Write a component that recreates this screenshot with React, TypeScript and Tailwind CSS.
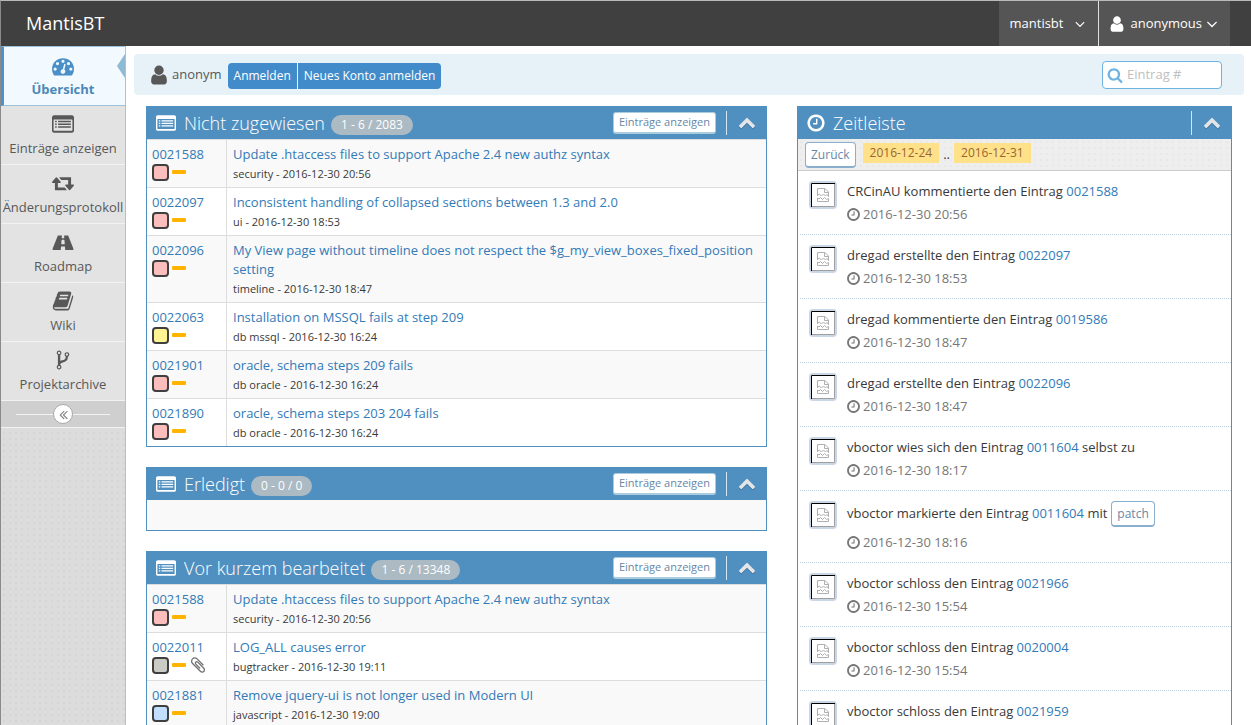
import React from "react";

type IconProps = { d: string; className?: string; box?: string };

function Icon({ d, className = "", box = "0 0 1792 1792" }: IconProps) {
  return (
    <svg viewBox={box} className={`shrink-0 ${className}`} fill="currentColor" fillRule="evenodd" aria-hidden="true">
      <path d={d} />
    </svg>
  );
}

const dot = "q0-53-37.5-90.5t-90.5-37.5-90.5 37.5-37.5 90.5 37.5 90.5 90.5 37.5 90.5-37.5 37.5-90.5z";

const paths = {
  user: "M1536 1399q0 109-62.5 187t-150.5 78h-854q-88 0-150.5-78t-62.5-187q0-85 8.5-160.5t31.5-152 58.5-131 94-89 134.5-34.5q131 128 313 128t313-128q76 0 134.5 34.5t94 89 58.5 131 31.5 152 8.5 160.5zm-256-887q0 159-112.5 271.5t-271.5 112.5-271.5-112.5-112.5-271.5 112.5-271.5 271.5-112.5 271.5 112.5 112.5 271.5z",
  search: "M1216 832q0-185-131.5-316.5t-316.5-131.5-316.5 131.5-131.5 316.5 131.5 316.5 316.5 131.5 316.5-131.5 131.5-316.5zm512 832q0 52-38 90t-90 38q-54 0-90-38l-343-342q-179 124-399 124-143 0-273.5-55.5t-225-150-150-225-55.5-273.5 55.5-273.5 150-225 225-150 273.5-55.5 273.5 55.5 225 150 150 225 55.5 273.5q0 220-124 399l343 343q37 37 37 90z",
  clock: "M1024 544v448q0 14-9 23t-23 9h-320q-14 0-23-9t-9-23v-64q0-14 9-23t23-9h224v-352q0-14 9-23t23-9h64q14 0 23 9t9 23zm416 352q0-148-73-273t-198-198-273-73-273 73-198 198-73 273 73 273 198 198 273 73 273-73 198-198 73-273zm224 0q0 209-103 385.5t-279.5 279.5-385.5 103-385.5-103-279.5-279.5-103-385.5 103-385.5 279.5-279.5 385.5-103 385.5 103 279.5 279.5 103 385.5z",
  chevronUp: "M1683 1331l-166 165q-19 19-45 19t-45-19l-531-531-531 531q-19 19-45 19t-45-19l-166-165q-19-19-19-45.5t19-45.5l742-741q19-19 45-19t45 19l742 741q19 19 19 45.5t-19 45.5z",
  angleDown: "M1395 736q0 13-10 23l-466 466q-10 10-23 10t-23-10l-466-466q-10-10-10-23t10-23l50-50q10-10 23-10t23 10l393 393 393-393q10-10 23-10t23 10l50 50q10 10 10 23z",
  doubleLeft: "M1011 1376q0 13-10 23l-50 50q-10 10-23 10t-23-10l-466-466q-10-10-10-23t10-23l466-466q10-10 23-10t23 10l50 50q10 10 10 23t-10 23l-393 393 393 393q10 10 10 23zm384 0q0 13-10 23l-50 50q-10 10-23 10t-23-10l-466-466q-10-10-10-23t10-23l466-466q10-10 23-10t23 10l50 50q10 10 10 23t-10 23l-393 393 393 393q10 10 10 23z",
  listAlt: "M160 192h1472q66 0 113 47t47 113v1088q0 66-47 113t-113 47h-1472q-66 0-113-47t-47-113v-1088q0-66 47-113t113-47zM128 560v848q0 32 32 32h1472q32 0 32-32v-848q0-32-32-32h-1472q-32 0-32 32zM256 640h128v112h-128zM496 640h1040v112h-1040zM256 864h128v112h-128zM496 864h1040v112h-1040zM256 1088h128v112h-128zM496 1088h1040v112h-1040z",
  retweet: "M1280 1632q0 13-9.5 22.5t-22.5 9.5h-960q-8 0-13.5-2t-9-7-5.5-8-3-11.5-1-11.5v-600h-192q-26 0-45-19t-19-45q0-24 15-41l320-384q19-22 49-22t49 22l320 384q15 17 15 41 0 26-19 45t-45 19h-192v384h576q16 0 25 11l160 192q7 10 7 21zm640-416q0 24-15 41l-320 384q-20 23-49 23t-49-23l-320-384q-15-17-15-41 0-26 19-45t45-19h192v-384h-576q-16 0-25-12l-160-192q-7-9-7-20 0-13 9.5-22.5t22.5-9.5h960q8 0 13.5 2t9 7 5.5 8 3 11.5 1 11.5v600h192q26 0 45 19t19 45z",
  road: "M1111 996v-4l-24-320q-1-13-11-22.5t-23-9.5h-186q-13 0-23 9.5t-11 22.5l-24 320v4q-1 12 8 20t21 8h244q12 0 21-8t8-20zm759 467q0 73-46 73h-704q13 0 22-9.5t8-22.5l-20-256q-1-13-11-22.5t-23-9.5h-272q-13 0-23 9.5t-11 22.5l-20 256q-1 13 8 22.5t22 9.5h-704q-46 0-46-73 0-54 26-116l417-1044q8-19 26-33t38-14h339q-13 0-23 9.5t-11 22.5l-15 192q-1 14 8 23t22 9h166q13 0 22-9t8-23l-15-192q-1-13-11-22.5t-23-9.5h339q20 0 38 14t26 33l417 1044q26 62 26 116z",
  book: "M1703 478q40 57 18 129l-275 906q-19 64-76.5 107.5t-122.5 43.5h-923q-77 0-148.5-53.5t-99.5-131.5q-24-67-2-127 0-4 3-27t4-37q1-8-3-21.5t-3-19.5q2-11 8-21t16.5-23.5 16.5-23.5q23-38 45-91.5t30-91.5q3-10 .5-30t-.5-28q3-11 17-28t17-23q21-36 42-92t25-90q1-9-2.5-32t.5-28q4-13 22-30.5t22-22.5q19-26 42.5-84.5t27.5-96.5q1-8-3-25.5t-2-26.5q2-8 9-18t18-23 17-21q8-12 16.5-30.5t15-35 16-36 19.5-32 26.5-23.5 36-11.5 47.5 5.5l-1 3q38-9 51-9h761q74 0 114 56t18 130l-274 906q-36 119-71.5 153.5t-128.5 34.5h-869q-27 0-38 15-11 16-1 43 24 70 144 70h923q29 0 56-15.5t35-41.5l300-987q7-22 5-57 38 15 59 43zm-1064 2q-4 13 2 22.5t20 9.5h608q13 0 25.5-9.5t16.5-22.5l21-64q4-13-2-22.5t-20-9.5h-608q-13 0-25.5 9.5t-16.5 22.5zm-83 256q-4 13 2 22.5t20 9.5h608q13 0 25.5-9.5t16.5-22.5l21-64q4-13-2-22.5t-20-9.5h-608q-13 0-25.5 9.5t-16.5 22.5z",
  fork: "M672 1472q0-40-28-68t-68-28-68 28-28 68 28 68 68 28 68-28 28-68zm0-1152q0-40-28-68t-68-28-68 28-28 68 28 68 68 28 68-28 28-68zm640 128q0-40-28-68t-68-28-68 28-28 68 28 68 68 28 68-28 28-68zm96 0q0 52-26 96.5t-70 69.5q-2 287-226 414-67 38-203 81-128 40-169.5 71t-41.5 100v26q44 25 70 69.5t26 96.5q0 80-56 136t-136 56-136-56-56-136q0-52 26-96.5t70-69.5v-820q-44-25-70-69.5t-26-96.5q0-80 56-136t136-56 136 56 56 136q0 52-26 96.5t-70 69.5v497q54-26 154-57 55-17 87.5-29.5t70.5-31 59-39.5 40.5-51 28-69.5 8.5-91.5q-44-25-70-69.5t-26-96.5q0-80 56-136t136-56 136 56 56 136z",
  paperclip: "M1596 1385q0 117-79 196t-196 79q-135 0-235-100l-777-776q-113-115-113-271 0-159 110-270t269-111q158 0 273 113l605 606q10 10 10 22 0 16-30.5 46.5t-46.5 30.5q-13 0-23-10l-606-607q-79-77-181-77-106 0-179 75t-73 181q0 105 76 181l776 777q63 63 145 63 64 0 106-42t42-106q0-82-63-145l-581-581q-26-24-60-24-29 0-48 19t-19 48q0 32 25 59l410 410q10 10 10 22 0 16-31 47t-47 31q-12 0-22-10l-410-410q-63-61-63-149 0-82 57-139t139-57q88 0 149 63l581 581q100 98 100 235z",
  dashboard:
    `M384 1152${dot}M576 704${dot}` +
    "M1004 1185l101-382q6-26-7.5-48.5t-38.5-29.5-48 6.5-30 39.5l-101 382q-60 5-107 43.5t-63 98.5q-20 77 20 146t117 89 146-20 89-117q16-60-6-117t-72-91z" +
    `M1664 1152${dot}M1024 512${dot}M1472 704${dot}` +
    "M1792 1152q0 261-141 483-19 29-54 29h-1402q-35 0-54-29-141-221-141-483 0-182 71-348t191-286 286-191 348-71 348 71 286 191 191 286 71 348z",
};

type Nav = { label: string; d: string; box?: string };

const navItems: Nav[] = [
  { label: "Einträge anzeigen", d: paths.listAlt },
  { label: "Änderungsprotokoll", d: paths.retweet, box: "0 128 1920 1792" },
  { label: "Roadmap", d: paths.road, box: "0 0 1920 1664" },
  { label: "Wiki", d: paths.book },
  { label: "Projektarchive", d: paths.fork },
];

type Issue = { id: string; title: string; category: string; date: string; status: string; clip?: boolean };

const RED = "bg-[#fcbdbd]";

const unassigned: Issue[] = [
  { id: "0021588", title: "Update .htaccess files to support Apache 2.4 new authz syntax", category: "security", date: "2016-12-30 20:56", status: RED },
  { id: "0022097", title: "Inconsistent handling of collapsed sections between 1.3 and 2.0", category: "ui", date: "2016-12-30 18:53", status: RED },
  { id: "0022096", title: "My View page without timeline does not respect the $g_my_view_boxes_fixed_position setting", category: "timeline", date: "2016-12-30 18:47", status: RED },
  { id: "0022063", title: "Installation on MSSQL fails at step 209", category: "db mssql", date: "2016-12-30 16:24", status: "bg-[#fff494]" },
  { id: "0021901", title: "oracle, schema steps 209 fails", category: "db oracle", date: "2016-12-30 16:24", status: RED },
  { id: "0021890", title: "oracle, schema steps 203 204 fails", category: "db oracle", date: "2016-12-30 16:24", status: RED },
];

const recent: Issue[] = [
  { id: "0021588", title: "Update .htaccess files to support Apache 2.4 new authz syntax", category: "security", date: "2016-12-30 20:56", status: RED },
  { id: "0022011", title: "LOG_ALL causes error", category: "bugtracker", date: "2016-12-30 19:11", status: "bg-[#c9ccc4]", clip: true },
  { id: "0021881", title: "Remove jquery-ui is not longer used in Modern UI", category: "javascript", date: "2016-12-30 19:00", status: "bg-[#c2dfff]" },
];

type Event = { before: string; id: string; after?: string; tag?: string; time?: string };

const events: Event[] = [
  { before: "CRCinAU kommentierte den Eintrag", id: "0021588", time: "2016-12-30 20:56" },
  { before: "dregad erstellte den Eintrag", id: "0022097", time: "2016-12-30 18:53" },
  { before: "dregad kommentierte den Eintrag", id: "0019586", time: "2016-12-30 18:47" },
  { before: "dregad erstellte den Eintrag", id: "0022096", time: "2016-12-30 18:47" },
  { before: "vboctor wies sich den Eintrag", id: "0011604", after: "selbst zu", time: "2016-12-30 18:17" },
  { before: "vboctor markierte den Eintrag", id: "0011604", after: "mit", tag: "patch", time: "2016-12-30 18:16" },
  { before: "vboctor schloss den Eintrag", id: "0021966", time: "2016-12-30 15:54" },
  { before: "vboctor schloss den Eintrag", id: "0020004", time: "2016-12-30 15:54" },
  { before: "vboctor schloss den Eintrag", id: "0021959" },
];

function CollapseButton() {
  return (
    <div className="flex h-6 items-center border-l border-[#d5e6f2] pl-[11px]">
      <button type="button" aria-label="Einklappen" className="pb-[2px] text-[#e2e6e9]">
        <Icon d={paths.chevronUp} className="size-[18px] drop-shadow-[0_1px_0_rgba(0,0,0,0.25)]" />
      </button>
    </div>
  );
}

function IssueBox({ title, badge, children }: { title: string; badge: string; children: React.ReactNode }) {
  return (
    <section className="border border-t-0 border-[#5090c1]">
      <header className="-mx-px flex h-[33px] items-center justify-between bg-[#5090c1] pl-[10px] pr-[11px] text-white">
        <div className="flex items-center">
          <Icon d={paths.listAlt} className="size-5" />
          <h2 className="ml-[8px] text-lg font-light">{title}</h2>
          <span className="ml-[6px] mt-1 flex h-5 items-center rounded-full bg-[#abbac3] px-[10px] text-xs">{badge}</span>
        </div>
        <div className="flex items-center gap-[10px]">
          <a href="#" className="flex h-[22px] items-center rounded-[3px] border border-b-2 border-[#abccdf] bg-white px-[5px] pt-px text-[11px] text-[#6688a6]">
            Einträge anzeigen
          </a>
          <CollapseButton />
        </div>
      </header>
      {children}
    </section>
  );
}

function IssueTable({ issues }: { issues: Issue[] }) {
  return (
    <table className="w-full border-separate border-spacing-0 text-[13px] leading-[19px]">
      <tbody>
        {issues.map((issue) => (
          <tr key={issue.id} className="align-top odd:bg-[#f9f9f9]">
            <td className="w-20 border-r border-t border-[#ddd] pl-[5px] pt-[5px]">
              <a href="#" className="block text-[#337ab7]">{issue.id}</a>
              <div className="-mt-px flex h-[18px] items-center gap-[3px]">
                <span className={`size-[17px] rounded border-2 border-[#3f3f3f] ${issue.status}`} />
                <span className="h-1 w-[14px] rounded-[1px] bg-[#ffb400]" />
                {issue.clip && <Icon d={paths.paperclip} className="size-[18px] text-[#707070]" />}
              </div>
            </td>
            <td className="border-t border-[#ddd] px-[6px] pb-[3px] pt-[5px]">
              <a href="#" className="text-[#337ab7]">{issue.title}</a>
              <p className="text-[11px] leading-5 text-[#393939]">
                {issue.category} - {issue.date}
              </p>
            </td>
          </tr>
        ))}
      </tbody>
    </table>
  );
}

function Avatar() {
  return (
    <span className="flex size-7 shrink-0 items-center justify-center rounded bg-[#c9d6e5]">
      <svg viewBox="0 0 24 24" className="size-6" aria-hidden="true">
        <path d="M0 0h24v24H0z" fill="#fff" />
        <path d="M23.5 1v22.500H1" fill="none" stroke="#a0a0a0" />
        <path d="M.5 24V.5H24" fill="none" stroke="#000" />
        <g fill="none" stroke="#b0b0b0">
          <path d="M6.500 13V5.500h7.500l3.500 3.500v4.500" />
          <path d="M13.500 5.500v4h4" />
          <path d="M6.500 12.500l2-1.500 2 2 2-2 2 2 1.500-1.500 1.500 2" />
          <path d="M6.500 15v3.500h11v-3l-2 1-2-2-2 2-2-2-1.500 1.500z" />
        </g>
      </svg>
    </span>
  );
}

export default function App() {
  return (
    <div className="flex h-screen flex-col overflow-hidden border-l border-t border-[#8a8a8a] border-t-[#b8bab8] bg-white font-['Open_Sans','Noto_Sans',sans-serif] text-[13px] text-[#393939]">
      <header className="flex h-[45px] shrink-0 items-center justify-between bg-[#404040] pl-[25px] pr-[21px] text-white">
        <a href="#" className="pb-[2px] text-lg">MantisBT</a>
        <nav className="flex h-full">
          <button type="button" className="flex h-full items-center gap-[9px] bg-[#555] pl-[11px] pr-[10px]">
            mantisbt
            <Icon d={paths.angleDown} className="size-4" />
          </button>
          <button type="button" className="flex h-full items-center border-l border-[#e0e0e0] bg-[#555] pl-[9px] pr-[9px]">
            <Icon d={paths.user} className="size-[18px]" />
            <span className="ml-1 mr-px">anonymous</span>
            <Icon d={paths.angleDown} className="size-[18px]" />
          </button>
        </nav>
      </header>

      <div className="flex min-h-0 flex-1">
        <aside className="w-[125px] shrink-0 border-r border-[#a3c4dc] bg-[#dcdcdc] bg-[radial-gradient(#d5d5d5_1px,transparent_1px)] bg-[length:6px_6px]">
          <nav>
            <a href="#" className="relative flex h-[60px] flex-col items-center gap-[3px] border-y border-l-[3px] border-[#9cc1da] border-l-[#4b93cc] bg-[#f2f9ff] pr-[3px] pt-2 font-bold text-[#4b88b7]">
              <Icon d={paths.dashboard} className="size-[22px] text-[#4b8fc8]" />
              <span className="leading-[18px]">Übersicht</span>
              <svg viewBox="0 0 8 24" className="absolute right-0 top-[7px] h-6 w-2" aria-hidden="true">
                <path d="M8 0v24L0 12z" fill="#8fbad6" />
              </svg>
            </a>
            {navItems.map((item) => (
              <a key={item.label} href="#" className="flex h-[59px] flex-col items-center gap-1 whitespace-nowrap border-b border-[#f2f2f2] bg-[#e3e3e3] pt-[7px] text-[#585858]">
                <Icon d={item.d} box={item.box} className="size-[22px]" />
                <span className="leading-[18px]">{item.label}</span>
              </a>
            ))}
          </nav>
          <div className="flex h-[27px] items-center border-b border-[#f2f2f2] bg-[#cfcfcf] px-[15px]">
            <span className="h-px flex-1 bg-[#f2f2f2]" />
            <button type="button" aria-label="Menü einklappen" className="flex size-5 items-center justify-center rounded-full border border-[#aaa] bg-white text-[#888]">
              <Icon d={paths.doubleLeft} className="size-[15px]" />
            </button>
            <span className="h-px flex-1 bg-[#f2f2f2]" />
          </div>
        </aside>

        <main className="min-w-0 flex-1 overflow-y-auto [scrollbar-width:none]">
          <div className="ml-2 mr-[7px] mt-2 flex h-[41px] items-center justify-between rounded bg-[#e6f1f8] pl-[14px] pr-[22px]">
            <div className="flex items-center text-[#585858]">
              <Icon d={paths.user} className="size-[22px]" />
              <span className="ml-[2px]">anonym</span>
              <div className="ml-[6px] mt-[2px] flex h-[26px] gap-px overflow-hidden rounded text-xs text-white">
                <a href="#" className="flex items-center bg-[#428bca] px-[6px]">Anmelden</a>
                <a href="#" className="flex items-center bg-[#428bca] px-[6px]">Neues Konto anmelden</a>
              </div>
            </div>
            <label className="flex h-7 w-[120px] items-center gap-1 rounded border border-[#6fb3e0] bg-white px-1">
              <Icon d={paths.search} className="size-4 text-[#6fb3e0]" />
              <input aria-label="Eintrag #" placeholder="Eintrag #" className="w-full min-w-0 bg-transparent text-[13px] outline-none placeholder:text-[#c0c0c0]" />
            </label>
          </div>

          <div className="mt-[11px] grid grid-cols-[621fr_435fr] items-start gap-[30px] pl-5 pr-[19px]">
            <div className="flex min-w-0 flex-col gap-5">
              <IssueBox title="Nicht zugewiesen" badge="1 - 6 / 2083">
                <IssueTable issues={unassigned} />
              </IssueBox>
              <IssueBox title="Erledigt" badge="0 - 0 / 0">
                <div className="h-[30px] bg-[#f9f9f9]" />
              </IssueBox>
              <IssueBox title="Vor kurzem bearbeitet" badge="1 - 6 / 13348">
                <IssueTable issues={recent} />
              </IssueBox>
            </div>

            <section className="min-w-0 border border-t-0 border-[#5090c1]">
              <header className="-mx-px flex h-[33px] items-center justify-between bg-[#5090c1] pl-[9px] pr-[11px] text-white">
                <div className="flex items-center">
                  <Icon d={paths.clock} className="size-5" />
                  <h2 className="ml-[7px] text-lg font-light">Zeitleiste</h2>
                </div>
                <CollapseButton />
              </header>
              <div className="flex h-8 items-center border-b border-[#ccc] bg-[#eee] bg-[radial-gradient(#e8e8e8_1px,transparent_1px)] bg-[length:6px_6px] pl-[7px]">
                <a href="#" className="flex h-[26px] items-center rounded border border-b-2 border-[#8aafce] bg-white px-[5px] pt-px text-xs text-[#6688a6]">Zurück</a>
                <span className="mb-1 ml-[7px] bg-[#fee188] px-[7px] text-xs leading-5 text-[#963]">2016-12-24</span>
                <span className="mx-1">..</span>
                <span className="mb-1 bg-[#fee188] px-[7px] text-xs leading-5 text-[#963]">2016-12-31</span>
              </div>
              <ul>
                {events.map((e) => (
                  <li key={e.before + e.id} className="ml-[2px] flex gap-[10px] border-b border-dotted border-[#c0d0dc] py-[10px] pl-[9px]">
                    <Avatar />
                    <div className="leading-5">
                      <p className="flex items-start gap-1">
                        <span className={e.tag ? "pt-[2px]" : ""}>
                          {e.before} <a href="#" className="text-[#337ab7]">{e.id}</a> {e.after}
                        </span>
                        {e.tag && (
                          <a href="#" className="mb-[2px] flex h-[26px] items-center rounded border border-b-2 border-[#8aafce] bg-white px-[5px] pt-px text-xs text-[#6688a6]">{e.tag}</a>
                        )}
                      </p>
                      {e.time && (
                        <p className="mt-[3px] flex items-center gap-[2px] text-[#777]">
                          <Icon d={paths.clock} className="-ml-px size-[15px]" />
                          <time>{e.time}</time>
                        </p>
                      )}
                    </div>
                  </li>
                ))}
              </ul>
            </section>
          </div>
        </main>
      </div>
    </div>
  );
}
